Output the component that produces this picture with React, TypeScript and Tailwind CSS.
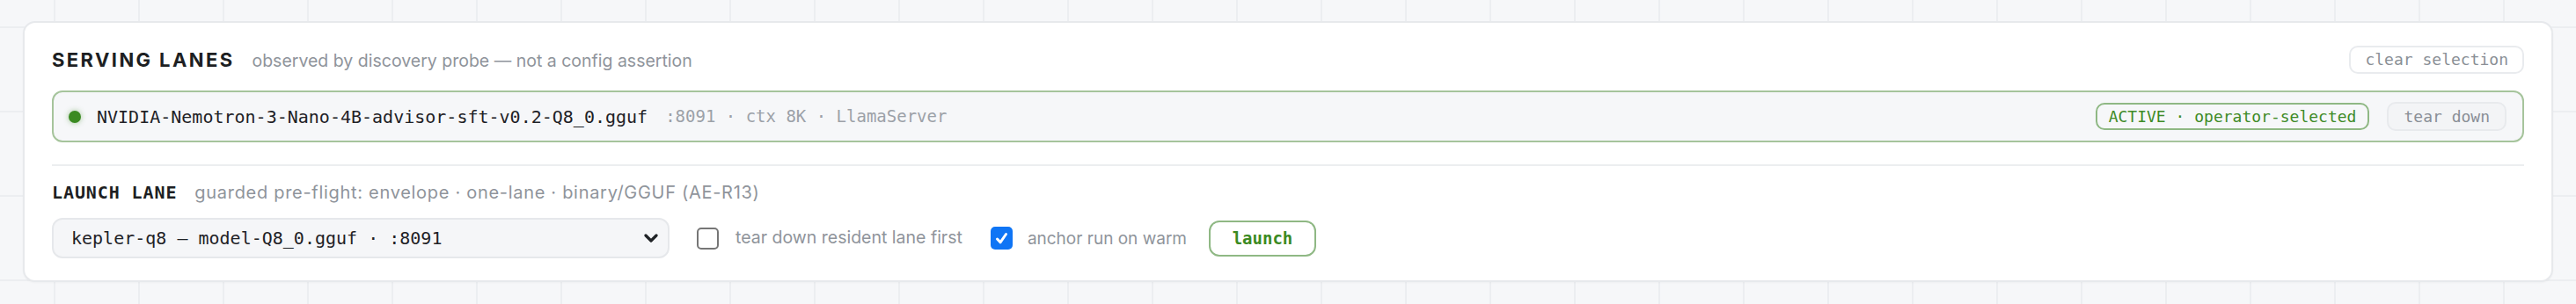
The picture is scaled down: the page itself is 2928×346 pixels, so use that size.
const mono = "font-['DejaVu_Sans_Mono',monospace]";
const sans = "font-['Inter',sans-serif]";

export default function App() {
  return (
    <div className="min-h-screen w-full bg-[#f6f7f9] bg-[linear-gradient(to_right,#eceef1_2px,transparent_2px),linear-gradient(to_bottom,#eceef1_2px,transparent_2px)] bg-[size:96px_96px] bg-[position:61px_30px] px-[26px] pt-[24px] pb-[25px]">
      <div className="w-full rounded-[14px] border-2 border-[#e7e9ec] bg-white px-[31px] pt-[26px] pb-[25px] shadow-[0_1px_2px_rgba(0,0,0,0.03)]">
        {/* serving lanes */}
        <div className="flex h-[32px] items-center justify-between">
          <div className="flex items-baseline gap-[20px]">
            <h2 className={`${sans} text-[22px] font-bold leading-none tracking-[2.4px] text-[#1d1f23]`}>
              SERVING LANES
            </h2>
            <span className={`${sans} text-[19.5px] leading-none text-[#8f949b]`}>
              observed by discovery probe — not a config assertion
            </span>
          </div>
          <button className={`${mono} h-[32px] rounded-[10px] border-2 border-[#e9ebee] bg-white px-[16px] text-[18px] leading-none text-[#8a8f96]`}>
            clear selection
          </button>
        </div>

        <div className="mt-[19px] flex h-[59px] items-center rounded-[12px] border-2 border-[#a6c49c] bg-[#f6f7f9] pl-[17px] pr-[18px]">
          <span className="h-[14px] w-[14px] rounded-full bg-[#3b8a22] shadow-[0_0_6px_rgba(59,138,34,0.45)]"></span>
          <span className={`${mono} ml-[18px] text-[20px] leading-none text-[#1f2226]`}>
            NVIDIA-Nemotron-3-Nano-4B-advisor-sft-v0.2-Q8_0.gguf
          </span>
          <span className={`${mono} ml-[20px] text-[19px] leading-none text-[#9ca1a8]`}>
            :8091 · ctx 8K · LlamaServer
          </span>
          <span className={`${mono} ml-auto flex h-[31px] items-center rounded-[10px] border-2 border-[#8fb884] px-[13px] text-[18px] leading-none text-[#3f8b27]`}>
            ACTIVE · operator-selected
          </span>
          <button className={`${mono} ml-[20px] h-[33px] rounded-[10px] border-2 border-[#e8eaed] bg-[#f3f4f6] px-[17px] text-[18px] leading-none text-[#8a8f96]`}>
            tear down
          </button>
        </div>

        <div className="mt-[25px] h-[2px] bg-[#eceef0]"></div>

        {/* launch lane */}
        <div className="mt-[18px] flex h-[24px] items-baseline gap-[20px]">
          <h3 className={`${mono} text-[20px] font-bold leading-[24px] tracking-[0.9px] text-[#1d1f23]`}>
            LAUNCH LANE
          </h3>
          <span className={`${sans} text-[20px] leading-[24px] tracking-[0.7px] text-[#8f949b]`}>
            guarded pre-flight: envelope · one-lane · binary/GGUF (AE-R13)
          </span>
        </div>

        <div className="mt-[17px] flex h-[46px] items-center">
          <div className="flex h-[46px] w-[702px] items-center justify-between rounded-[12px] border-2 border-[#e6e8eb] bg-[#f5f6f8] pl-[20px] pr-[10px]">
            <span className={`${mono} text-[20px] leading-none text-[#1f2226]`}>
              kepler-q8 — model-Q8_0.gguf · :8091
            </span>
            <svg width="16" height="12" viewBox="0 0 16 12" className="mr-[1px]">
              <path d="M2 3 L8 9 L14 3" fill="none" stroke="#1f2226" strokeWidth="3.2" strokeLinecap="round" strokeLinejoin="round" />
            </svg>
          </div>

          <span className="ml-[31px] h-[25px] w-[25px] rounded-[5px] border-2 border-[#767676] bg-white"></span>
          <span className={`${sans} ml-[19px] text-[19.5px] leading-none text-[#8f949b]`}>
            tear down resident lane first
          </span>

          <span className="ml-[32px] flex h-[26px] w-[25px] items-center justify-center rounded-[5px] bg-[#0f75f5]">
            <svg width="17" height="17" viewBox="0 0 17 17">
              <path d="M3.5 9 L7 12.8 L13.5 3.5" fill="none" stroke="#ffffff" strokeWidth="3" strokeLinecap="round" strokeLinejoin="round" />
            </svg>
          </span>
          <span className={`${sans} ml-[17px] text-[19px] leading-none text-[#8f949b]`}>
            anchor run on warm
          </span>

          <button className={`${mono} ml-[25px] h-[41px] w-[122px] rounded-[12px] border-2 border-[#8fb884] bg-white text-[19px] font-bold leading-none text-[#3b8a22]`}>
            launch
          </button>
        </div>
      </div>
    </div>
  );
}
